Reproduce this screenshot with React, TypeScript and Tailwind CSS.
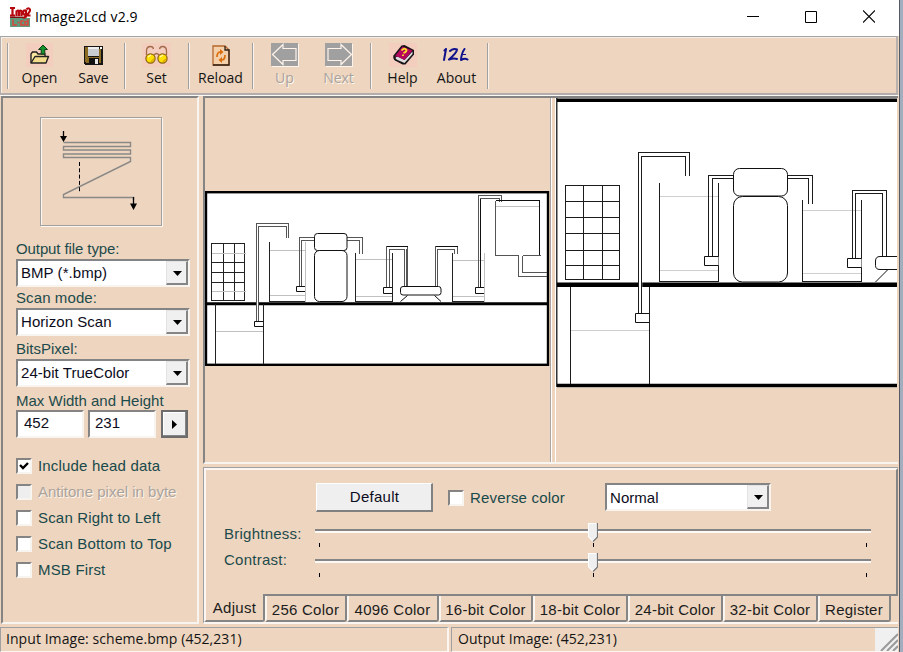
import React from "react";

const ui = "font-['Open_Sans','Noto_Sans',sans-serif]";
const sunken = "border-2 border-t-[#848484] border-l-[#848484] border-r-[#f8f4f0] border-b-[#f8f4f0]";

function AppIcon() {
  return (
    <svg width="21" height="20" viewBox="0 0 21 20">
      <rect y="11" width="20" height="9" fill="#5f9a7d" />
      <path d="M0 1h5M2.500 1v8M0 8.500h5M6.500 9V3.500M6.500 4.500q2-2 2.500 0V9M9 4.500q2-2 2.500 0V9M16 3.500q-3-.5-3 2t3 2M16 3v6q0 2-3 1.500M16.500 2.500q2-2.500 3.500 0 .5 2-3.500 6h4" stroke="#b5070d" strokeWidth="2.200" fill="none" />
      <path d="M0 9.500h13v1.500H0z" fill="#7d1010" />
      <path d="M3 12.500v5.500h4M7.500 15.500h2M13.500 14h-2.500v4h3M18 12v6h-3v-3.500h3" stroke="#d9473c" strokeWidth="1.500" fill="none" />
    </svg>
  );
}

function OpenIcon() {
  return (
    <svg width="27" height="24" viewBox="0 0 27 24">
      <rect width="27" height="24" fill="#f3cdbd" />
      <path d="M5 20V11l1.500-2h4l1.500 2h7v3" fill="#fbe7a0" stroke="#222" strokeWidth="1.400" />
      <path d="M5 20l4-6.500h13.500L20 20z" fill="#f2dc8c" stroke="#222" strokeWidth="1.400" strokeLinejoin="round" />
      <path d="M17 2l4.500 4.500h-2.700V11h-3.600V6.500h-2.700z" fill="#12952d" stroke="#123c18" />
    </svg>
  );
}

function SaveIcon() {
  return (
    <svg width="19" height="19" viewBox="0 0 19 19" shapeRendering="crispEdges">
      <path d="M0 0h19v19H1l-1-1z" fill="#161616" />
      <path d="M1 1h3v10h11V3h2v14H2l-1-1z" fill="#8b6a21" />
      <path d="M4 1h11v9H4z" fill="#c9ccd0" />
      <path d="M4 1h11v2H4z" fill="#eeeeee" />
      <path d="M5 12h10v6H5z" fill="#111" />
      <path d="M11 13h3v5h-3z" fill="#e8e8e8" />
      <path d="M16 1h2v2h-2z" fill="#fff" />
    </svg>
  );
}

function GlassesIcon() {
  return (
    <svg width="29" height="24" viewBox="0 0 29 24">
      <rect width="29" height="24" fill="#f3cdbd" />
      <path d="M4.500 12V8q0-4.500 4-4.500 2.500 0 3 2.500M24.500 12V8q0-4.500-4-4.500-2.500 0-3 2.500M12 12q2.500-3 5 0" fill="none" stroke="#a36a4b" strokeWidth="1.3" />
      <circle cx="8.500" cy="15.500" r="4.600" fill="#ffe000" stroke="#8a6010" strokeWidth="1.200" />
      <circle cx="20.500" cy="15.500" r="4.600" fill="#ffe000" stroke="#8a6010" strokeWidth="1.200" />
      <path d="M6 14l3-2M18 14l3-2" stroke="#fff8b0" strokeWidth="1.500" />
      <path d="M9 19l3-3M21 19l3-3" stroke="#dda800" strokeWidth="1.500" />
    </svg>
  );
}

function ReloadIcon() {
  return (
    <svg width="18" height="21" viewBox="0 0 18 21">
      <path d="M1 1h12l4 4v15H1z" fill="#f4d0aa" stroke="#b4672d" strokeWidth="1.300" />
      <path d="M13 1v4h4v15H1" fill="none" stroke="#302018" strokeWidth="1.300" />
      <path d="M8.500 7q-3.500 0-3.500 5M9.500 15q3.500 0 3.500-5" fill="none" stroke="#dc6d0b" strokeWidth="1.700" />
      <path d="M8 4l3.500 3L8 10zM10 18l-3.500-3L10 12z" fill="#dc6d0b" />
    </svg>
  );
}

function ArrowIcon({ flip }: { flip?: boolean }) {
  return (
    <svg width="28" height="24" viewBox="0 0 28 24">
      <path d="M1 1h27v23H1z" fill="#fdf4ec" />
      <path d="M0 0h27v23H0z" fill="#a0a0a0" />
      <g transform={flip ? "translate(28 0) scale(-1 1)" : undefined}>
        <path d="M1.500 11.500l10.500-10v4h13v12h-13v4z" fill="none" stroke="#fff3ea" strokeWidth="1.200" />
      </g>
    </svg>
  );
}

function HelpIcon() {
  return (
    <svg width="28" height="24" viewBox="0 0 28 24">
      <rect width="28" height="24" fill="#f3cdbd" />
      <path d="M4.500 12.500L12.500 2.500l3-.5 9.500 5v4.500l-8.500 10h-3l-7.500-4q-2.500-2-1.500-5z" fill="#171317" />
      <path d="M6.500 15q1-2 3-1l6 3 8-8.500v2.500l-8 9-7-3q-2-1-2-2z" fill="#dedede" />
      <path d="M6.500 12.500l7-9 10 4-8 9.500-6-3q-2-1-3 0z" fill="#b5085d" />
      <path d="M12.500 7.500q3-3.500 5-.5 0 2-3 3M14 11.500v1.500" fill="none" stroke="#ffe22a" strokeWidth="1.800" />
    </svg>
  );
}

function AboutIcon() {
  return (
    <svg width="29" height="14" viewBox="0 0 29 14" fill="none" stroke="#10128c" strokeWidth="2" strokeLinecap="round" strokeLinejoin="round">
      <path d="M4 1L2 12M2.500 2.500L4 1" />
      <path d="M8 3q3-3 7-1.500 0 3-8 10 5-1.500 8-.5" />
      <path d="M22.500 1q-3 4-3.500 11 4-2 6.500-.500" />
      <path d="M20.500 6.500h3" strokeWidth="1.200" />
    </svg>
  );
}

function Divider({ className }: { className: string }) {
  return <div className={`mt-[6px] h-[46px] w-[2px] border-l border-r border-l-[#a0a0a0] border-r-[#fbf3ec] ${className}`} />;
}

function Tool({ icon, label, width, disabled }: { icon: React.ReactNode; label: string; width: string; disabled?: boolean }) {
  return (
    <div className={`flex shrink-0 flex-col items-center ${width}`}>
      <div className="mt-[4px] -ml-px flex h-[28px] items-center justify-center">{icon}</div>
      <div className={`-mt-px -ml-px h-[20px] text-[14px] leading-[20px] whitespace-nowrap ${ui} ${disabled ? "text-[#a9a29b] [text-shadow:1px_1px_0_#fff6ee]" : "text-[#141414]"}`}>{label}</div>
    </div>
  );
}

function Combo({ value, className }: { value: string; className: string }) {
  return (
    <div className={`flex h-[28px] bg-white text-[15px] text-[#0c0c20] ${sunken} ${className}`}>
      <span className="flex-1 pl-[3px] leading-[23px] tracking-[0.05px] whitespace-nowrap">{value}</span>
      <span className="flex w-[22px] items-center justify-center border border-t-[#e3e3e3] border-r-2 border-b-2 border-l-[#e3e3e3] border-r-[#858585] border-b-[#858585] bg-[#f0f0f0] pt-px pl-px">
        <svg width="9" height="5" viewBox="0 0 9 5"><path d="M0 0h9L4.500 5z" fill="#000" /></svg>
      </span>
    </div>
  );
}

function Check({ label, checked, disabled }: { label: string; checked?: boolean; disabled?: boolean }) {
  return (
    <div className="flex h-[26px] items-center">
      <span className={`h-[16px] w-[16px] ${sunken} ${disabled ? "bg-[#efeeee]" : "bg-white"}`}>
        {checked && (
          <svg width="12" height="12" viewBox="0 0 12 12"><path d="M2 5l3 3 5-5" fill="none" stroke="#000" strokeWidth="2.4" /></svg>
        )}
      </span>
      <span className={`ml-[6px] whitespace-nowrap ${disabled ? "text-[#aaa39c] [text-shadow:1px_1px_0_#fff6ee]" : "tracking-[0.18px] text-[#18494b]"}`}>{label}</span>
    </div>
  );
}

function ScanDiagram() {
  return (
    <svg width="118" height="105" viewBox="42 119 118 105" fill="none">
      <path d="M63.500 142.500H130.500V146.500H63.500V150H130.500V154H63.500V157.500H130.500V161.500L63.500 194.500V197.500H133.500V200" stroke="#8b8986" strokeWidth="1.400" />
      <path d="M79.500 162v30" stroke="#000" strokeDasharray="4 2.300" />
      <path d="M63.500 131v6M133.500 197v8" stroke="#000" strokeWidth="1.300" />
      <path d="M60 136h7l-3.500 6zM130 203.500h7l-3.500 6.500z" fill="#000" />
    </svg>
  );
}

function SmallPreview() {
  return (
    <svg width="345" height="176" viewBox="205 191 345 176" fill="none" className="block">
      <rect x="206" y="192.200" width="342" height="172.600" fill="#fff" stroke="#000" strokeWidth="2.400" />
      <path d="M206 303.700H548" stroke="#000" strokeWidth="3" />
      <g stroke="#222" strokeWidth="1" shapeRendering="crispEdges">
        <path d="M211.500 243.500H244.500V300.500H211.500zM211.500 262.500H244.500M211.500 272.500H244.500M211.500 282.500H244.500M223.500 243.500V300.500M234.500 243.500V300.500" />
        <path d="M269.500 241.500V301.500H305M355.500 252.500V301.500H392M392.500 252.500V301.500M452.500 252.500V301.500H484M263.500 304V364M215.500 304V364" />
      </g>
      <g stroke="#c0c0c0" shapeRendering="crispEdges">
        <path d="M211.500 253.500H245.500M211.500 291.500H245.500M269.500 250.500H305M269.500 295.500H305M305.500 241.500V301.500M216 331.500H263M356 259.500H392M356 296.500H392M453 260.500H484M453 296.500H484M484.500 252.500V301.500M495.500 206.500H540" />
      </g>
      <path d="M257.500 225V321" stroke="#fff" strokeWidth="2" />
      <g stroke="#555" strokeWidth="1" shapeRendering="crispEdges">
        <path d="M256.500 321.500V223.500H288V237.500M258.500 321.500V226.500H286V237.500" />
        <path d="M299.500 286.500V237.500H314M301.500 286.500V240.500H314M347 237.500H362.500V254M347 240.500H359.500V254" />
        <path d="M386.500 287.500V246.500H407.500V286.500M389.500 287.500V249.500H404.500V286.500M406 249V286M435.500 286.500V246.500H457.500V254M437.500 286.500V249.500H454.500V254" />
        <path d="M478.500 287.500V195.500H501.500V201.500M480.500 287.500V198.500H499.500V201.500" />
        <path d="M495.500 200.500V255.500H518.500V276.500H547M522.500 255.500V272.500H547M522.500 255.500H540.500" />
      </g>
      <g stroke="#111" shapeRendering="crispEdges">
        <path d="M386.500 246.500H407.500M435.500 246.500H457.500M495.500 200.500H539.500V255M480.500 199V287" />
      </g>
      <g fill="#fff" stroke="#111">
        <path d="M263 321.500H254.500V326.500H263M305 286.500H296.500V291.500H305M392 287.500H383.500V293.500H392M484 287.500H475.500V293.500H484" />
        <rect x="314.500" y="233.500" width="32.500" height="17" rx="3" />
        <rect x="314.500" y="250.500" width="32.500" height="51" rx="5" />
        <rect x="400.500" y="286.500" width="40.500" height="8.500" rx="2.500" />
        <path d="M407.500 295.500L400.500 301.500M434.500 295.500L441 301.500" />
      </g>
    </svg>
  );
}

function LargePreview() {
  return (
    <svg width="341" height="290" viewBox="556 98 341 290" fill="none" className="block">
      <rect x="556" y="98" width="341" height="289.500" fill="#fff" />
      <path d="M556.500 98V387" stroke="#333" strokeWidth="2" />
      <path d="M557 100.200H897M557 385.500H897" stroke="#000" strokeWidth="3.600" />
      <path d="M557 284.700H897" stroke="#000" strokeWidth="4.600" />
      <g stroke="#cfcfcf" shapeRendering="crispEdges">
        <path d="M571 330.500H649M660 196.500H718M660 270.500H718M803 210.500H861M803 273.500H861" />
      </g>
      <path d="M640.500 154V313" stroke="#fff" strokeWidth="3.500" />
      <g stroke="#1c1c1c" strokeWidth="1" shapeRendering="crispEdges">
        <path d="M565.500 185.500H619.500V279.500H565.500zM565.500 201.500H619.500M565.500 217.500H619.500M565.500 233.500H619.500M565.500 250.500H619.500M565.500 265.500H619.500M583.500 185.500V279.500M602.500 185.500V279.500" />
        <path d="M638.500 313.500V152.500H689.500V175.500M641.500 313.500V156.500H685.500V175.500" />
        <path d="M659.500 182.500V281.500H718.500V182.500M802.500 200V281.500H861.500V200M570.500 287V384M649.500 287V384" />
        <path d="M708.500 256.500V175.500H733M712.500 256.500V178.500H733M787 175.500H812.500V203.500M787 178.500H808.500V203.500" />
        <path d="M852.500 258.500V190.500H886.500V256.500M855.500 258.500V193.500H882.500V256.500" />
      </g>
      <g fill="#fff" stroke="#111">
        <path d="M649 313.500H635.500V322.500H649M718.500 256.500H704.500V265.500H718.500M861.500 258.500H847.500V267.500H861.500" />
        <rect x="733.500" y="168.500" width="54" height="27.500" rx="6" />
        <rect x="733.500" y="196.500" width="54" height="85.500" rx="9" />
        <path d="M898 256.500H880Q875.500 256.500 875.500 261V265.500Q875.500 269.500 880 269.500H898M887.500 270L875.500 282" />
      </g>
    </svg>
  );
}

function Slider() {
  return (
    <div className="relative h-[30px] w-[556px]">
      <div className="h-[6px]" />
      <div className="h-[4px] border-t-[2px] border-b-[2px] border-t-[#858585] border-b-[#fdf9f5]" />
      <svg className="absolute top-0 left-[273px]" width="10" height="19" viewBox="0 0 10 19">
        <path d="M0 0h10v14l-5 5-5-5z" fill="#fff" />
        <path d="M9.500 0v14L5 18.500" fill="none" stroke="#777" strokeWidth="1.400" />
        <path d="M1 1h7v12.500L4.500 17 1 13.500z" fill="#efefef" />
      </svg>
      <div className="mt-[10px] flex justify-between pr-[4px] pl-[4px]">
        <i className="h-[4px] w-px bg-black" />
        <i className="h-[4px] w-px bg-black" />
        <i className="h-[4px] w-px bg-black" />
      </div>
    </div>
  );
}

function Tab({ label, width }: { label: string; width: string }) {
  return (
    <div className={`h-[26px] shrink-0 rounded-br-[3px] border-r-2 border-b-2 border-l-2 border-l-[#fbf5ef] border-r-[#858585] border-b-[#858585] text-center leading-[27px] tracking-[0.25px] whitespace-nowrap ${width}`}>
      <span className="-ml-px">{label}</span>
    </div>
  );
}

export default function App() {
  return (
    <div className="flex h-[652px] w-[903px] overflow-hidden bg-[#edd5bf] font-['Liberation_Sans',Arial,sans-serif] text-[15px]">
      <div className="flex w-[899px] flex-col">
        <header className="flex h-[36px] shrink-0 items-center bg-white">
          <div className="-mt-[3px] ml-[10px]"><AppIcon /></div>
          <h1 className={`-mt-[2px] ml-[4px] text-[14px] leading-[20px] tracking-[0.12px] text-black ${ui}`}>Image2Lcd v2.9</h1>
          <div className="-mt-[3px] mr-[24px] ml-auto flex items-center gap-[46px]">
            <svg width="12" height="13" viewBox="0 0 12 13"><path d="M0 6.500h12" stroke="#000" /></svg>
            <svg width="12" height="13" viewBox="0 0 12 13"><path d="M.5 1.500h11v11H.5z" fill="none" stroke="#000" /></svg>
            <svg width="12" height="13" viewBox="0 0 12 13"><path d="M0 .5l12 12M12 .5l-12 12" stroke="#000" strokeWidth="1.100" /></svg>
          </div>
        </header>

        <nav className="flex h-[59px] w-[898px] shrink-0 border-t border-r-2 border-b-2 border-l border-t-[#a3a3a3] border-r-[#b8b1ae] border-b-[#b3adab] border-l-[#b3adab] shadow-[inset_1px_1px_0_#f5efe9]">
          <Divider className="ml-[6px]" />
          <Tool icon={<OpenIcon />} label="Open" width="ml-[4px] w-[54px]" />
          <Tool icon={<SaveIcon />} label="Save" width="w-[54px]" />
          <Divider className="ml-[3px]" />
          <Tool icon={<GlassesIcon />} label="Set" width="ml-[4px] w-[54px]" />
          <Divider className="ml-[4px]" />
          <Tool icon={<ReloadIcon />} label="Reload" width="ml-[4px] w-[54px]" />
          <Divider className="ml-[4px]" />
          <Tool icon={<ArrowIcon />} label="Up" width="ml-[4px] w-[54px]" disabled />
          <Tool icon={<ArrowIcon flip />} label="Next" width="w-[54px]" disabled />
          <Divider className="ml-[4px]" />
          <Tool icon={<HelpIcon />} label="Help" width="ml-[4px] w-[54px]" />
          <Tool icon={<AboutIcon />} label="About" width="w-[54px]" />
          <Divider className="ml-[3px]" />
        </nav>
        <div className="h-px shrink-0 bg-[#fbf8f5]" />

        <main className="flex h-[528px] shrink-0">
          <aside className={`ml-px flex w-[198px] flex-col pl-[13px] text-[#1d4b4c] ${sunken}`}>
            <div className="mt-[19px] ml-[24px] h-[109px] w-[122px] border border-[#a0a0a0] pt-px pl-px shadow-[1px_1px_0_#fdf7f1,inset_1px_1px_0_#fdf7f1]">
              <ScanDiagram />
            </div>
            <label className="mt-[14px] h-[19px] leading-[18px] tracking-[-0.1px]">Output file type:</label>
            <Combo value="BMP (*.bmp)" className="w-[174px]" />
            <label className="mt-[2px] h-[19px] leading-[18px] tracking-[0.1px]">Scan mode:</label>
            <Combo value="Horizon Scan" className="w-[174px]" />
            <label className="mt-[4px] h-[19px] leading-[18px]">BitsPixel:</label>
            <Combo value="24-bit TrueColor" className="w-[174px]" />
            <label className="mt-[4px] h-[19px] leading-[19px] whitespace-nowrap">Max Width and Height</label>
            <div className="flex text-[#0c0c20]">
              <div className={`h-[28px] w-[68px] bg-white pl-[6px] leading-[22px] ${sunken}`}>452</div>
              <div className={`ml-[4px] h-[28px] w-[68px] bg-white pl-[5px] leading-[22px] ${sunken}`}>231</div>
              <div className="ml-[5px] flex h-[28px] w-[27px] items-center justify-center border-[2px] border-[#6c6c6c] bg-[#f0f0f0] shadow-[inset_-1px_-1px_0_#858585,inset_1px_1px_0_#fff]">
                <svg width="6" height="9" viewBox="0 0 6 9"><path d="M0 0l5 4.500L0 9z" fill="#000" /></svg>
              </div>
            </div>
            <div className="mt-[15px]">
              <Check label="Include head data" checked />
              <Check label="Antitone pixel in byte" disabled />
              <Check label="Scan Right to Left" />
              <Check label="Scan Bottom to Top" />
              <Check label="MSB First" />
            </div>
          </aside>

          <div className="ml-[4px] flex w-[695px] flex-col">
            <section className={`flex h-[368px] shrink-0 border-r-0 ${sunken}`}>
              <div className="w-[345px] pt-[93px]"><SmallPreview /></div>
              <div className="flex w-[6px] justify-between">
                <div className="w-[2px] border-r border-r-[#fff] bg-[#aaa5a1]" />
                <div className="w-[1px] bg-white" />
              </div>
              <div className="w-[341px] overflow-hidden"><LargePreview /></div>
            </section>
            <section className="mt-[3px] h-[157px] w-[695px] border-t border-b-2 border-l border-t-[#a0a0a0] border-b-[#fbf6f1] border-l-[#a0a0a0]">
              <div className="h-[128px] border-t-2 border-r-2 border-b-2 border-l-2 border-t-[#fbf6f1] border-r-[#858585] border-b-[#858585] border-l-[#fbf6f1]">
                <div className="flex pt-[13px] pl-[110px]">
                  <button className="h-[29px] w-[117px] border border-t-white border-r-2 border-b-2 border-l-white border-r-[#808080] border-b-[#808080] bg-[#efefef] pl-px leading-[24px] tracking-[0.25px] text-[#0c0c20]">Default</button>
                  <div className="mt-[2px] ml-[15px] w-[157px] text-[#18494b]"><Check label="Reverse color" /></div>
                  <Combo value="Normal" className="w-[166px] [&>span:first-child]:leading-[25px]" />
                </div>
                <div className="flex pt-[11px] text-[#1d4b4c]">
                  <div className="w-[109px] pl-[18px] leading-[26px] tracking-[0.25px]">
                    <div className="-mt-[2px]">Brightness:</div>
                    <div>Contrast:</div>
                  </div>
                  <div><Slider /><Slider /></div>
                </div>
              </div>
              <div className="flex text-[#1c1c1c]">
                <div className="mt-[-2px] h-[28px] w-[61px] rounded-br-[3px] border-r-2 border-b-2 border-l-2 border-l-[#fbf6f1] border-r-[#858585] border-b-[#858585] bg-[#edd5bf] text-center leading-[28px] tracking-[0.3px]">Adjust</div>
                <Tab label="256 Color" width="w-[82px]" />
                <Tab label="4096 Color" width="w-[92px]" />
                <Tab label="16-bit Color" width="w-[94px]" />
                <Tab label="18-bit Color" width="w-[95px]" />
                <Tab label="24-bit Color" width="w-[95px]" />
                <Tab label="32-bit Color" width="w-[95px]" />
                <Tab label="Register" width="w-[73px]" />
              </div>
            </section>
          </div>
        </main>

        <footer className={`mt-[3px] flex h-[25px] shrink-0 text-[14px] leading-[22px] tracking-[0.06px] whitespace-nowrap text-[#141414] ${ui}`}>
          <div className="w-[449px] border-t border-r-2 border-b border-l border-t-[#a0a0a0] border-r-[#fbf6f1] border-b-[#fbf6f1] border-l-[#a0a0a0] pl-[5px]">Input Image: scheme.bmp (452,231)</div>
          <div className="ml-[2px] flex w-[447px] border-t border-b border-l border-t-[#a0a0a0] border-b-[#fbf6f1] border-l-[#a0a0a0] pl-[6px]">
            <span className="flex-1">Output Image: (452,231)</span>
            <svg width="23" height="23" viewBox="0 0 23 23">
              <path d="M0 0h23v23H0z" fill="#f0f0f0" />
              <path d="M6 23L23 6M12 23L23 12M18 23l5-5" stroke="#999" strokeWidth="2" />
            </svg>
          </div>
        </footer>
      </div>
      <div className="w-[4px] shrink-0 border-l border-l-[#555a65] bg-[#a2adbd]" />
    </div>
  );
}
